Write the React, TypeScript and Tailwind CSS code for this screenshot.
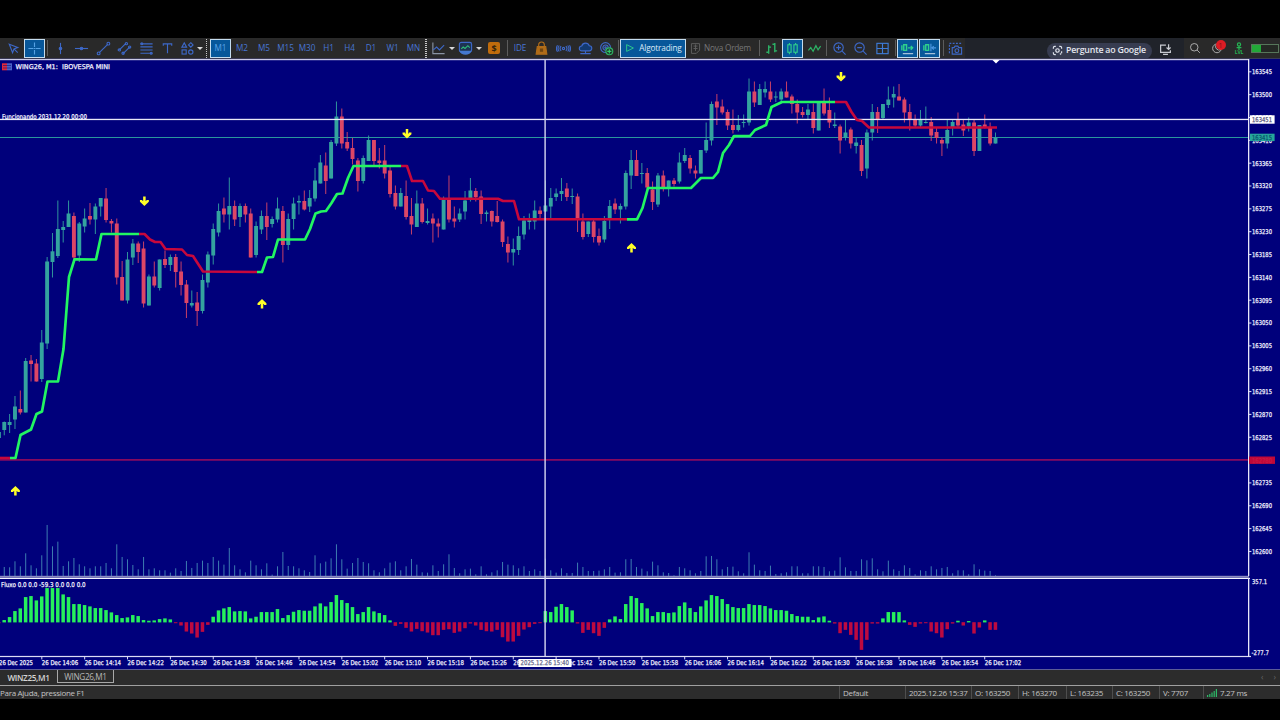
import type { ReactNode } from "react";

const STEP = 5.358;
const X0 = -1.1;
const cx = (i: number) => X0 + STEP * i;

// dir high top bottom low
const CANDLES = `g 432 432 438 438|g 421.5 422 430 435.3|g 414 422 425 433|g 396 406.5 419.5 429|r 390.5 409 412.5 414.5|g 358 361 412.5 412.5|r 355 360.5 364 381.5|r 359 363.5 381.5 381.5|g 330 342.5 379 382|g 257 261.5 343.5 349
g 233 251.3 262 277.5|g 200.5 229 256 258|g 221 227 230 242.5|g 200.5 213.5 227 227|r 212.5 216 257.5 260|g 222 223.5 255.5 262|g 208.5 218.5 226.5 232.5|r 203 216 219.5 224.5|g 203.5 206.5 219.5 234|g 198 198 206.5 216.5
r 188 198.5 220 222.5|r 219 221 223.5 232.5|r 218.5 223.5 277.5 284.5|r 261 277 300.5 300.5|g 252 259.5 300.5 303.5|g 239 243.5 257.5 265|r 241.5 243.5 252 263|r 241.5 248.5 303.5 307.5|g 274.5 276.5 305.5 305.5|r 261.5 276.5 285.5 287.5
g 259.5 259.5 288 290.5|r 250.5 259 265 268|g 254.5 257 265 271|r 254 257 272 287.5|r 261.5 271.5 285 295.5|r 280 284.5 303 318|g 290.5 303 305.5 307.5|r 292 302.5 311 326|g 274.5 280 311 313.5|g 251.5 254.5 282.5 287.5
g 223.5 229 255.5 264.5|g 203.5 211 232.5 236.5|r 197.5 208.5 214.5 222.5|g 177.5 206 214.5 229.5|r 200.5 206 219.5 226|g 203.5 206 217 227|r 203.5 206 214.5 222.5|r 208.5 213.5 257.5 257.5|g 221.5 226 255 257.5|g 210.5 216 229.5 234
r 202.5 216 227 240|g 216.5 219 224 227.5|g 197.5 208.5 219.5 222.5|r 206 211 245 262.5|g 213.5 219 245 250|g 197.5 203.5 219 229.5|g 195.5 201 202.5 214.5|r 190.5 201 209.5 210.5|g 190 198 206.5 212|g 168 180.5 198.5 201.5
g 155 162.5 183.5 183.5|r 152.5 165.5 181 194|g 140 142 178.5 178.5|g 101.5 116.5 143.5 146|r 108.5 116.5 143.5 148.5|r 132 142 148.5 151|r 138 148 159 164.5|r 158 160.5 181 191.5|g 155.5 158 181 183.5|g 135.5 140 161 161
r 140 140 161 166|r 148 160.5 163 168.5|r 145 160.5 173.5 178.5|r 166 170.5 194 197.5|r 185.5 193 206.5 209.5|g 188 193 206.5 206.5|r 180.5 196 217 219.5|r 198 216 224.5 234.5|g 190.5 203.5 227 227|r 198 203.5 222 223.5
g 208.5 221 223 224.5|r 213.5 218.5 223.5 242.5|r 218.5 223.5 226.5 237.5|g 196.5 199.5 229.5 229.5|r 175.5 199.5 219.5 222.5|r 206.5 218.5 221.5 227.5|g 208.5 213.5 219.5 222|g 191 200.5 211.5 219.5|g 178 190.5 200 201.5|r 188 191 197 201.5
r 190.5 196.5 214 224|g 210.5 212.5 214 221.5|r 210.5 211 221.5 226.5|r 201 216 222 222.5|r 219.5 221.5 242 247|r 236.5 244 252.5 262.5|g 238.5 249 252.5 265.5|g 226.5 236 250 255|g 216 220.5 234.5 239.5|g 213.5 219.5 222 229.5
g 200.5 210.5 221.5 229.5|r 206.5 210.5 214 219.5|g 180.5 205.5 211.5 211.5|g 188 198 206.5 218.5|g 188.5 193.5 197 201|g 178 191 194 201|r 183 188.5 197 201|g 188.5 196 197 204|r 193.5 196.5 218.5 232|r 213.5 221.5 237 239.5
g 221.5 221.5 234 237|r 218.5 221.5 237 242.5|r 228.5 236 242.5 245.5|g 216 221 239.5 242.5|g 200 206 218.5 229|r 198.5 203.5 209.5 214|g 203.5 206 209.5 223.5|g 170.5 173 206.5 209.5|g 150 160 175.5 189|r 150 160 176 176
g 163 173 174 183.5|r 168 173 187.5 191.5|r 181.5 189.5 202 210|g 173 175.5 204.5 207|r 170.5 175.5 187.5 191.5|g 180.5 180.5 187 196.5|r 178 180.5 184 186.5|g 152.5 162.5 181.5 183.5|g 148 155 161 163|r 155 158 168.5 173.5
r 165.5 170.5 173.5 178.5|g 150 150 173.5 173.5|g 122.5 140 150.5 153|g 101.5 104 140.5 145.5|r 94 101.5 107.5 125|r 99.5 106.5 112.5 114.5|r 109.5 112 125.5 130|r 109.5 125 130 133.5|g 115 125 130 131.5|g 114.5 122 123 127.5
g 78.5 91.5 122.5 125.5|r 81.5 91.5 102.5 107|g 84 89 105 105|g 81.5 89 92.5 97.5|r 81.5 91.5 99.5 102|g 91.5 96.5 97.5 102|g 88.5 91.5 99.5 102|r 81.5 91.5 97.5 97.5|r 94.5 96.5 104 113.5|r 99.5 104 112.5 123.5
r 107 112 115 117.5|g 104 109.5 115 120|r 103.5 112 128 133.5|g 102 102 130.5 130.5|r 88.5 102.5 113.5 115.5|r 97.5 110 122.5 128|g 112.5 124.5 126 128|r 124.5 126.5 140.5 153.5|g 120 132.5 138 140.5|r 127.5 129.5 143.5 148.5
g 137.5 142.5 146 153.5|r 140 145 171 176|g 129.5 132.5 168.5 178.5|g 104 112 132.5 140.5|r 107 112 120 133|g 104 104 118 120|g 86.5 99.5 105 108|g 86.5 94 97.5 107.5|r 84 96.5 100.5 100.5|r 97.5 99.5 112.5 122.5
r 104 112 120 130.5|r 114.5 120 125.5 127.5|g 110 119.5 125.5 127.5|g 106.5 122 123 123.5|r 117 122 135.5 141|r 127.5 132 138 143.5|r 137.5 140 143.5 156|g 120 130 143.5 148.5|g 119.5 122 128 135.5|r 112.5 120 125.5 128
r 120 124.5 130.5 136|g 117.5 122.5 126.5 131.5|r 120 122.5 151 156|g 125 125 151 151|r 114.5 124.5 128 128.5|r 122.5 127.5 143.5 145.5|g 132.5 137.5 143.5 143.5`
   .split(/[|\n]/)
   .map((row) => {
      const [dir, ...nums] = row.trim().split(" ");
      return { up: dir === "g", v: nums.map(Number) };
   });

const VOLUMES = [
   0, 28, 27, 45, 30, 69, 33, 24, 63, 154, 90, 104, 31, 45, 55, 36, 30, 24, 30, 30, 40, 24, 96, 58, 51, 34, 21, 58, 21,
   24, 18, 18, 11, 24, 16, 46, 25, 40, 47, 40, 58, 47, 35, 85, 33, 21, 12, 47, 33, 21, 39, 5, 30, 73, 31, 30, 24, 18,
   13, 63, 39, 44, 54, 96, 51, 23, 40, 55, 43, 39, 18, 12, 24, 41, 45, 18, 30, 52, 35, 12, 11, 33, 16, 36, 66, 25, 9,
   21, 23, 6, 30, 6, 12, 18, 43, 35, 33, 24, 30, 16, 21, 16, 53, 18, 11, 24, 10, 10, 41, 28, 16, 16, 17, 21, 28, 11,
   12, 51, 52, 28, 23, 15, 44, 33, 12, 10, 3, 28, 24, 18, 9, 16, 60, 61, 51, 21, 28, 29, 15, 9, 72, 35, 18, 16, 32, 7,
   9, 12, 30, 30, 9, 9, 30, 30, 28, 15, 17, 57, 27, 16, 16, 51, 48, 54, 21, 15, 47, 21, 16, 33, 25, 6, 18, 16, 30, 21,
   25, 28, 9, 18, 18, 6, 36, 21, 17, 16, 3,
];

const FLUXO = [
   -3, 7, 16, 34, 42, 76, 79, 66, 78, 103, 103, 103, 84, 76, 55, 55, 52, 48, 43, 43, 37, 30, 22, 13, 15, 22, 19, 7, 5,
   6, 10, 12, 9, -3, -10, -28, -34, -46, -29, -8, 17, 36, 42, 46, 33, 34, 33, 12, 17, 31, 31, 31, 40, 13, 22, 32, 37,
   35, 35, 48, 57, 48, 61, 82, 67, 58, 46, 25, 31, 46, 33, 28, 22, 6, -11, -5, -17, -28, -20, -27, -31, -39, -39, -23,
   -21, -32, -28, -18, -4, -10, -23, -27, -28, -23, -45, -58, -58, -41, -22, -15, -5, -3, 34, 31, 47, 55, 46, 36, -4,
   -32, -23, -33, -41, -17, 9, 18, 10, 55, 79, 73, 58, 42, 19, 31, 31, 28, 30, 49, 60, 43, 31, 48, 66, 82, 79, 70, 55,
   46, 43, 43, 55, 52, 52, 49, 42, 37, 37, 35, 25, 19, 17, 17, 7, 15, 18, 5, -4, -33, -23, -38, -53, -83, -53, -4, -4,
   12, 31, 31, 31, 6, -8, -14, -4, -3, -28, -33, -46, -21, -4, 5, -10, 4, -34, -16, 6, -23, -23,
];

const GREEN_LINES = [
   "10,458 15.5,458 20.5,435 31,429.5 36.5,414 42,411.5 47.5,381.5 58,381.5 63.5,349 69,277 74.5,259.3 96,259.5 101.5,234 139,234",
   "257,272 262,272 267,257.5 273,257 278,239.5 305,239.5 310,229 315.5,213.5 321,211.5 326,211 331.5,203 337,194 342.5,193.5 348,178 353.5,166 401,166",
   "627,219.3 637,219.3 642.5,208 648,188 691,188 701,178 713,178 718,172 723,153 729,145 734,136 750,136 755,130 766,125 771.5,107 782,102 835,102",
];

const RED_LINES = [
   "0,458 10,458",
   "139,234 144.5,234 150,239.5 155,242 160.5,242 165.5,249 182,249.5 187,255 193,256 203,271.5 257,272",
   "401,166 407,166 412,181 423,181 428,190.5 434,191 440,198.7 498,198.7 503,201 514,201 519,219.3 627,219.3",
   "835,102 846,102 851.5,112 857,120 862,121 869,127.5 997,127.5",
];

const ARROWS = [
   { x: 15.4, y: 491, up: true },
   { x: 144.4, y: 201, up: false },
   { x: 262, y: 304, up: true },
   { x: 407, y: 133.5, up: false },
   { x: 631.5, y: 248, up: true },
   { x: 841, y: 76.5, up: false },
];

const PRICES = Array.from({ length: 22 }, (_, i) => ({ value: 163545 - 45 * i, y: 71.8 + 22.84 * i })).filter(
   (p) => p.value !== 162780
);

const TIMES = Array.from({ length: 23 }, (_, i) => {
   const m = 14 * 60 + 6 + 8 * i;
   return { x: 41.8 + 42.86 * i, label: `26 Dec ${Math.floor(m / 60)}:${String(m % 60).padStart(2, "0")}` };
});

function Label({ x, y, w, children, fill = "#f2f2ff" }: { x: number; y: number; w: number; children: ReactNode; fill?: string }) {
   return (
      <text
         x={x}
         y={y + 2.4}
         textLength={w}
         lengthAdjust="spacingAndGlyphs"
         fill={fill}
         stroke={fill}
         strokeWidth="0.25"
         className="font-['DejaVu_Sans',sans-serif] text-[6.6px]"
      >
         {children}
      </text>
   );
}

function Chart() {
   return (
      <svg viewBox="0 58 1280 612" className="block h-[612px] w-[1280px] shrink-0">
         <rect x="0" y="58" width="1280" height="612" fill="#00007b" />
         <rect x="0" y="58" width="1280" height="1" fill="#3a3a55" />
         <rect x="0" y="59" width="1249" height="1.2" fill="#c9c9e6" />

         {VOLUMES.map((v, i) => (
            <rect key={i} x={cx(i) - 0.5} y={576.3 - v / 3} width="1" height={v / 3} fill="#3d7cb0" />
         ))}

         <rect x="0" y="137" width="1249" height="1" fill="#2a969c" />
         <rect x="0" y="459.2" width="1249" height="1.4" fill="#a80c58" />

         {CANDLES.map(({ up, v }, i) => (
            <g key={i} fill={up ? "#34a39f" : "#dc4666"}>
               <rect x={cx(i) - 0.5} y={v[0]} width="1" height={v[3] - v[0]} opacity="0.9" />
               <rect x={cx(i) - 1.95} y={v[1]} width="3.9" height={Math.max(v[2] - v[1], 1)} />
            </g>
         ))}

         <rect x="0" y="118.8" width="1249" height="1.3" fill="#e8e8f8" />
         {RED_LINES.map((p) => (
            <polyline key={p} points={p} fill="none" stroke="#c8083c" strokeWidth="2.6" strokeLinejoin="round" />
         ))}
         {GREEN_LINES.map((p) => (
            <polyline key={p} points={p} fill="none" stroke="#22f562" strokeWidth="2.7" strokeLinejoin="round" />
         ))}
         {ARROWS.map((a) => (
            <path
               key={a.x}
               transform={`translate(${a.x} ${a.y}) scale(1 ${a.up ? 1 : -1})`}
               d="M0 4.5V-2.6M-3.2 0.9V-0.1L0 -3.2L3.2 -0.1V0.9"
               fill="none"
               stroke="#ffff28"
               strokeWidth="2.5"
            />
         ))}
         <path d="M992.5 60h7l-3.5 3.4z" fill="#fff" />

         {/* panel separators */}
         <rect x="0" y="575.8" width="1249" height="1.8" fill="#8c8cc0" />
         <rect x="0" y="577.8" width="1250" height="1.2" fill="#f4f4ff" />
         {FLUXO.map((v, i) => (
            <rect
               key={i}
               x={cx(i) - 1.8}
               y={v > 0 ? 622.4 - v / 3 : 622.2}
               width="3.5"
               height={Math.abs(v) / 3}
               fill={v > 0 ? "#26f05c" : "#bd0a40"}
            />
         ))}

         <rect x="544.4" y="60" width="1.4" height="597" fill="#d6d6f0" />
         <rect x="0" y="655.9" width="1251" height="1.2" fill="#dcdcf4" />
         <rect x="1248" y="59" width="1.3" height="517" fill="#e8e8fa" />
         <rect x="1248" y="578" width="1.3" height="79" fill="#e8e8fa" />

         {PRICES.map((p) => (
            <g key={p.value}>
               <rect x="1249" y={p.y - 0.5} width="2.4" height="1" fill="#dcdcf4" />
               <Label x={1252} y={p.y} w={20}>
                  {p.value}
               </Label>
            </g>
         ))}
         <rect x="1250" y="115.3" width="24.6" height="8.4" fill="#fff" />
         <Label x={1252} y={119.8} w={20} fill="#55557c">
            163451
         </Label>
         <rect x="1250" y="133.7" width="24.6" height="7.4" fill="#26a69a" />
         <Label x={1252} y={137.6} w={20} fill="#07536e">
            163415
         </Label>
         <rect x="1249" y="456.5" width="26" height="7.4" fill="#c00838" />
         <Label x={1252} y={460.2} w={20} fill="#cc1844">
            162780
         </Label>
         <Label x={1252} y={581.8} w={15}>
            357.1
         </Label>
         <Label x={1251.5} y={652.8} w={17.5}>
            -277.7
         </Label>

         <Label x={-1} y={662.8} w={34}>
            26 Dec 2025
         </Label>
         {TIMES.map((t) => (
            <g key={t.label}>
               <rect x={t.x - 0.5} y="657" width="1" height="2.4" fill="#dcdcf4" />
               <Label x={t.x} y={662.8} w={36.4}>
                  {t.label}
               </Label>
            </g>
         ))}
         <rect x="518.5" y="659" width="53" height="8" fill="#fff" />
         <Label x={520.5} y={662.8} w={48.5} fill="#66668c">
            2025.12.26 15:40
         </Label>

         <rect x="2" y="63.3" width="5" height="7" fill="#e0283c" />
         <rect x="7" y="63.3" width="5" height="7" fill="#4a62c8" />
         <path d="M3 65.5h8M3 68h8" stroke="#1a1a80" strokeWidth="0.7" />
         <Label x={15.5} y={66.8} w={94.5}>
            WING26, M1:&nbsp; IBOVESPA MINI
         </Label>
         <Label x={2} y={116.6} w={85}>
            Funcionando 2031.12.20 00:00
         </Label>
         <Label x={1} y={584.6} w={84.6}>
            Fluxo 0.0 0.0 -59.3 0.0 0.0 0.0
         </Label>
         <rect x="0" y="669.4" width="1280" height="0.8" fill="#9a9aa8" />
      </svg>
   );
}

function Icon({ children, color = "text-[#3d68c8]", size = "size-[15px]" }: { children: ReactNode; color?: string; size?: string }) {
   return (
      <svg viewBox="0 0 16 16" fill="none" stroke="currentColor" strokeWidth="1.2" className={`shrink-0 ${size} ${color}`}>
         {children}
      </svg>
   );
}

function Cell({ w, active, children }: { w: string; active?: boolean; children?: ReactNode }) {
   return (
      <div
         className={`flex shrink-0 items-center justify-center ${w} ${
            active ? "h-[19px] border border-[#c4dcee] bg-[#07579a]" : "h-full"
         }`}
      >
         {children}
      </div>
   );
}

function Divider({ w = "w-1" }: { w?: string }) {
   return (
      <Cell w={w}>
         <div className="h-4 w-px bg-[#5c5c5c]" />
      </Cell>
   );
}

function Dots({ w }: { w: string }) {
   return (
      <Cell w={w}>
         <div className="h-[19px] w-[1.5px] bg-[repeating-linear-gradient(#c8c8c8_0_1px,transparent_1px_2px)]" />
      </Cell>
   );
}

function Caret() {
   return (
      <Cell w="w-[7px]">
         <div className="h-0 w-0 border-x-[3px] border-t-[3px] border-x-transparent border-t-[#d8d8d8]" />
      </Cell>
   );
}

function Period({ w, children }: { w: string; children: ReactNode }) {
   return (
      <Cell w={w}>
         <span className="font-medium text-[#4876d4]">{children}</span>
      </Cell>
   );
}

function Toolbar() {
   return (
      <div className="flex h-5 w-full shrink-0 items-center overflow-hidden bg-[#292929] pl-0.5 text-[8.2px] leading-none tracking-[-0.1px] whitespace-nowrap">
         <Cell w="w-[22px]">
            <Icon>
               <path d="M3.5 3.5l9 3.5-4 1.5-1.5 4zM9 9l3.5 3.5" />
            </Icon>
         </Cell>
         <Cell w="w-[21px]" active>
            <Icon color="text-[#55a2e4]">
               <path d="M8 1.5v5M8 9.5v5M1.5 8h5M9.5 8h5M7 8h2" />
            </Icon>
         </Cell>
         <Divider />
         <Cell w="w-[22px]">
            <Icon>
               <path d="M8 2v12" />
               <circle cx="8" cy="8" r="1.3" fill="currentColor" />
            </Icon>
         </Cell>
         <Cell w="w-[21px]">
            <Icon>
               <path d="M1 8h14" />
               <circle cx="8" cy="8" r="1.3" fill="currentColor" />
            </Icon>
         </Cell>
         <Cell w="w-[22px]">
            <Icon>
               <path d="M3.5 12.5l9-9" />
               <circle cx="2.8" cy="13.2" r="1.5" />
               <circle cx="13.2" cy="2.8" r="1.5" />
            </Icon>
         </Cell>
         <Cell w="w-[21px]">
            <Icon>
               <path d="M2.5 9.5l7-7M6.5 13.5l7-7" />
               <circle cx="2.5" cy="9.5" r="1.2" />
               <circle cx="10" cy="2.8" r="1.2" />
               <circle cx="6.5" cy="13" r="1.2" />
               <circle cx="13.5" cy="6.5" r="1.2" />
            </Icon>
         </Cell>
         <Cell w="w-[22px]">
            <Icon>
               <path d="M1.5 3h13M1.5 6.3h13M1.5 9.6h13M1.5 13h13" />
               <circle cx="3" cy="3" r="1" />
               <circle cx="13" cy="13" r="1" />
            </Icon>
         </Cell>
         <Cell w="w-[21px]">
            <Icon>
               <path d="M3.5 5V3h9v2M8 3v10" />
            </Icon>
         </Cell>
         <Cell w="w-[18px]">
            <Icon>
               <path d="M4.5 2l2.5 4.5H2z" />
               <path d="M11.5 1.8l2.4 2.4-2.4 2.4-2.4-2.4z" />
               <rect x="2.2" y="9.5" width="4.4" height="4.4" />
               <circle cx="11.5" cy="11.7" r="2.3" />
            </Icon>
         </Cell>
         <Caret />
         <Dots w="w-[7px]" />
         <Cell w="w-[21px]" active>
            <span className="font-medium text-[#5aa2e6]">M1</span>
         </Cell>
         <Period w="w-[22px]">M2</Period>
         <Period w="w-[22px]">M5</Period>
         <Period w="w-[21px]">M15</Period>
         <Period w="w-[22px]">M30</Period>
         <Period w="w-[21px]">H1</Period>
         <Period w="w-[21px]">H4</Period>
         <Period w="w-[22px]">D1</Period>
         <Period w="w-[21px]">W1</Period>
         <Period w="w-[21px]">MN</Period>
         <Dots w="w-[4px]" />
         <Cell w="w-[20px]">
            <Icon>
               <path d="M2 1.5v12h12.5" stroke="#8a94a4" />
               <path d="M2.5 9.5l3.5-3 3 3 5-5" />
            </Icon>
         </Cell>
         <Caret />
         <Cell w="w-[20px]">
            <Icon>
               <rect x="1.5" y="1.5" width="13" height="10" rx="2" fill="#1d3352" />
               <path d="M3.5 8.5l2-2 2 1.5 3-3 2 2" stroke="#2fbc78" />
               <path d="M1.5 10.5h13c-1 5.500-12 5.500-13 0z" fill="#4478d0" stroke="none" />
            </Icon>
         </Cell>
         <Caret />
         <Cell w="w-[24px]">
            <div className="flex size-3 items-center justify-center rounded-[2px] bg-[#c06c0c] text-[9px] font-bold text-[#33240c]">$</div>
         </Cell>
         <Divider w="w-[3px]" />
         <Period w="w-[22px]">IDE</Period>
         <Cell w="w-[21px]">
            <Icon color="text-[#b06c18]">
               <path d="M5 6V4a3 3 0 016 0v2" />
               <path d="M3.500 6h9l1.200 8H2.300z" fill="#b06c18" />
               <rect x="6.300" y="8" width="3.400" height="3.500" fill="#704510" stroke="none" />
            </Icon>
         </Cell>
         <Cell w="w-[22px]">
            <Icon>
               <circle cx="8" cy="8" r="1.2" />
               <path d="M5.5 5.5a3.6 3.6 0 000 5M10.5 5.5a3.6 3.6 0 010 5M3.5 4.800a5 5 0 000 6.400M12.500 4.800a5 5 0 010 6.400M1.600 4.500a6.500 6.500 0 000 7M14.400 4.500a6.500 6.500 0 010 7" />
            </Icon>
         </Cell>
         <Cell w="w-[22px]">
            <Icon>
               <path d="M4 10.5a2.6 2.6 0 010-5.2 4.2 4.2 0 018-.2 2.7 2.7 0 010 5.4zM8 10.5v3M2.5 13.5h11" fill="#133a70" />
            </Icon>
         </Cell>
         <Cell w="w-[21px]">
            <Icon>
               <circle cx="7" cy="7" r="5.3" />
               <circle cx="7" cy="7" r="2.8" />
               <circle cx="7" cy="7" r="0.8" />
               <circle cx="11" cy="11" r="3.7" fill="#20352b" stroke="#2fb463" />
               <path d="M11 8.8v4.4M8.8 11h4.4" stroke="#2fd06c" />
            </Icon>
         </Cell>
         <Divider w="w-[3px]" />
         <Cell w="w-[66px]" active>
            <Icon color="text-[#2fd08c]" size="size-3">
               <path d="M3.500 3.500l9 4.500-9 4.500z" />
            </Icon>
            <span className="ml-[3px] font-medium tracking-[-0.15px] text-[#dcebf8]">Algotrading</span>
         </Cell>
         <Cell w="w-[18px]">
            <Icon color="text-[#5e5e5e]" size="size-[13px]">
               <path d="M3 2h10v8l-4 4H3zM5.5 5h5M5.5 8h5M8 3v8" />
            </Icon>
         </Cell>
         <Cell w="w-[47px]">
            <span className="tracking-[-0.2px] text-[#777]">Nova Ordem</span>
         </Cell>
         <Cell w="w-[6px]" />
         <Divider />
         <Cell w="w-[21px]">
            <Icon color="text-[#2cb266]">
               <path d="M5 4.5v9M5 6.5h2.5M2.5 12H5M11.5 2v10M9 3.5h2.5M11.5 10.5H14" strokeWidth="1.5" />
            </Icon>
         </Cell>
         <Cell w="w-[21px]" active>
            <Icon color="text-[#2fd08c]">
               <rect x="3" y="4" width="3.5" height="8" />
               <rect x="9.5" y="4" width="3.5" height="8" />
               <path d="M4.7 2v2M4.7 12v2M11.3 2v2M11.3 12v2" />
            </Icon>
         </Cell>
         <Cell w="w-[22px]">
            <Icon color="text-[#2cb266]">
               <path d="M1.5 10l2.5-3 2.5 4 3-6 2.3 4.5 2.7-4" strokeWidth="1.3" />
            </Icon>
         </Cell>
         <Divider w="w-[3px]" />
         <Cell w="w-[22px]">
            <Icon>
               <circle cx="7" cy="7" r="5" />
               <path d="M10.8 10.8l3.7 3.7M7 4.5v5M4.5 7h5" />
            </Icon>
         </Cell>
         <Cell w="w-[21px]">
            <Icon>
               <circle cx="7" cy="7" r="5" />
               <path d="M10.8 10.8l3.7 3.7M4.5 7h5" />
            </Icon>
         </Cell>
         <Cell w="w-[22px]">
            <Icon color="text-[#3e7cd8]">
               <rect x="2" y="2.5" width="12" height="11" />
               <path d="M8 2.5v11M2 8h12" />
            </Icon>
         </Cell>
         <Divider />
         <Cell w="w-[21px]" active>
            <Icon color="text-[#2fd08c]">
               <path d="M2 4.5v5.5M4 4h3v6H4zM8.5 7.3h5M11.5 5.3l2 2-2 2" strokeWidth="1.5" />
               <path d="M3 13.5h11" stroke="#b4cce0" />
            </Icon>
         </Cell>
         <Cell w="w-px" />
         <Cell w="w-[21px]" active>
            <Icon color="text-[#2fd08c]">
               <path d="M2 4.5v5.5M4 4h3v6H4z" strokeWidth="1.5" />
               <path d="M9.5 3v8M15 7.3h-4M12.5 5.5l-1.8 1.8 1.8 1.8" stroke="#4c96e0" />
               <path d="M3 13.5h11" stroke="#b4cce0" />
            </Icon>
         </Cell>
         <Divider w="w-[6px]" />
         <Cell w="w-[19px]">
            <Icon>
               <path d="M1.5 13V2.5h13" strokeDasharray="2 1.5" />
               <path d="M4.5 7h2l1-1.5h3l1 1.5h3v7h-10z" />
               <circle cx="9.5" cy="10.3" r="2" />
            </Icon>
         </Cell>
         <div className="flex h-full w-[219px] shrink-0 items-center bg-[#20232a] pl-[82px]">
            <div className="mt-[5px] flex h-4 w-[105px] shrink-0 items-center rounded-full bg-[#373c50] pl-[5px]">
               <Icon color="text-[#e0e4ec]" size="size-[11px]">
                  <path d="M2 5.5V4a2 2 0 012-2h1.5M10.5 2H12a2 2 0 012 2v1.500M2 10.5V12a2 2 0 002 2h1.5M14 9v3" strokeWidth="1.7" />
                  <circle cx="8" cy="8" r="2.5" strokeWidth="1.7" />
                  <circle cx="12.5" cy="13" r="0.8" />
               </Icon>
               <span className="ml-[3px] text-[8.8px] font-semibold tracking-[-0.2px] text-[#e4e6ee]">Pergunte ao Google</span>
            </div>
            <div className="mt-[3px] ml-[7px]">
               <Icon color="text-[#c8cad0]" size="size-[13px]">
                  <path d="M8.5 2.5H2v9h12V9M5 14h6M11.8 1.5v6M9.3 5.5l2.5 2.5 2.5-2.5" strokeWidth="1.5" />
               </Icon>
            </div>
         </div>
         <Cell w="w-[22px]">
            <Icon color="text-[#b8b8b8]" size="size-3">
               <circle cx="7" cy="7" r="5" />
               <path d="M10.8 10.8l3.7 3.7" />
            </Icon>
         </Cell>
         <Cell w="w-[21px]">
            <div className="relative">
               <Icon color="text-[#b8b8b8]" size="size-3">
                  <circle cx="8" cy="8.5" r="5.8" />
                  <path d="M7 3.5a4.5 4.5 0 006 6.5" />
               </Icon>
               <div className="absolute -top-[2px] left-[5px] flex size-[10px] items-center justify-center rounded-full bg-[#dc1c24] text-[7px] text-[#7c1014]">1</div>
            </div>
         </Cell>
         <Cell w="w-[24px]">
            <div className="flex flex-col items-center text-[#25b454]">
               <svg viewBox="0 0 10 10" className="size-[8px]" fill="none" stroke="currentColor" strokeWidth="1.5">
                  <circle cx="5" cy="3" r="2" />
                  <path d="M5 5v5M2 7h6" />
               </svg>
               <span className="text-[5px] font-bold">LVL</span>
            </div>
         </Cell>
         <div className="h-[9px] w-[28px] shrink-0 border border-[#56765a] bg-[#242824]">
            <div className="h-full w-[9px] bg-[#22a838]" />
         </div>
      </div>
   );
}

function StatusField({ w, children }: { w: string; children: ReactNode }) {
   return <div className={`flex h-full shrink-0 items-center border-l border-[#4e4e4e] pt-px pl-[3px] ${w}`}>{children}</div>;
}

export default function App() {
   return (
      <div className="flex h-[720px] w-[1280px] flex-col overflow-hidden bg-black pt-[38px] font-['Open_Sans',sans-serif]">
         <Toolbar />
         <Chart />
         <div className="flex h-[15px] shrink-0 items-start bg-[#2c2c2c] text-[8.2px] leading-none">
            <div className="flex h-full w-[57px] items-center justify-center pt-px font-semibold tracking-[-0.35px] text-[#d4d4d4]">WINZ25,M1</div>
            <div className="flex h-[13px] w-[57px] items-center justify-center border border-t-0 border-[#a8a8a8] pt-[2px] tracking-[-0.35px] text-[#b8b8b8]">WING26,M1</div>
            <div className="ml-auto flex h-full items-center gap-[10px] pr-1 text-[#666]">
               <span>‹</span>
               <span>›</span>
            </div>
         </div>
         <div className="flex h-[14px] shrink-0 items-center border-t border-[#a0a0a0] bg-[#2c2c2c] text-[8px] leading-none tracking-[-0.3px] whitespace-nowrap text-[#c4c4c4]">
            <div className="w-[839px] shrink-0 pt-px">Para Ajuda, pressione F1</div>
            <StatusField w="w-[66px]">Default</StatusField>
            <StatusField w="w-[66px]">2025.12.26 15:37</StatusField>
            <StatusField w="w-[47px]">O: 163250</StatusField>
            <StatusField w="w-[48px]">H: 163270</StatusField>
            <StatusField w="w-[46px]">L: 163235</StatusField>
            <StatusField w="w-[47px]">C: 163250</StatusField>
            <StatusField w="w-[44px]">V: 7707</StatusField>
            <StatusField w="w-[77px]">
               <svg viewBox="0 0 10 8" className="mr-[3px] h-2 w-[10px]" fill="#2cba68">
                  <path d="M0 6h1.2v2H0zM2.2 5h1.2v3H2.2zM4.4 3.5h1.2v4.5H4.4zM6.6 2h1.2v6H6.6zM8.8 0H10v8H8.8z" />
               </svg>
               7.27 ms
            </StatusField>
         </div>
      </div>
   );
}
